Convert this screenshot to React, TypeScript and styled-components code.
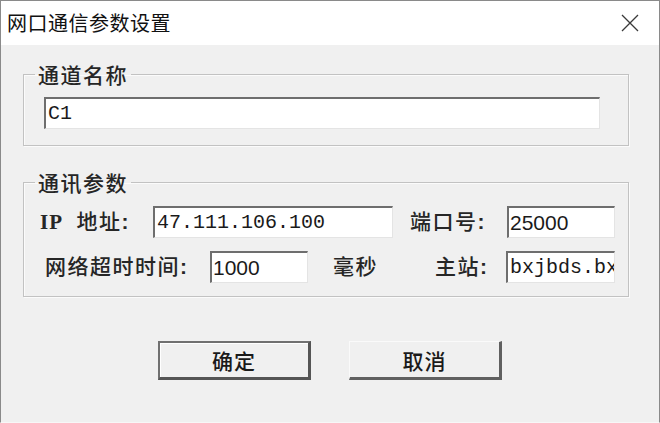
import React from "react";
import styled, { createGlobalStyle } from "styled-components";

const Global = createGlobalStyle`
  html, body { margin: 0; padding: 0; background: #f0f0f0; }
  body { width: 660px; height: 423px; overflow: hidden; }
  * { box-sizing: border-box; }
`;

const Window = styled.div`
  width: 660px;
  height: 423px;
  border: 1px solid #8a8a8a;
  border-bottom: 1px solid #f7f7f7;
  background: #f0f0f0;
  display: flex;
  flex-direction: column;
  font-family: "Noto Sans CJK SC", sans-serif;
  color: #1c1c1c;
`;

const TitleBar = styled.div`
  height: 44px;
  flex: none;
  background: #ffffff;
  display: flex;
  align-items: center;
  justify-content: space-between;
  padding: 0 20px 0 6px;
`;

const Title = styled.div`
  font-size: 20px;
  line-height: 1;
  color: #111;
  letter-spacing: 0.5px;
`;

const CloseIcon = styled.svg`
  width: 18px;
  height: 18px;
  display: block;
`;

const Body = styled.div`
  flex: 1;
  display: flex;
  flex-direction: column;
  padding: 17px 30px 0 22px;
`;

const Group = styled.fieldset<{ $top?: number }>`
  margin: ${(p) => p.$top ?? 0}px 0 0 0;
  padding: 0;
  min-width: 0;
  border: 1px solid #c2c2c2;
  box-shadow: inset 1px 1px 0 #fbfbfb, 1px 1px 0 #fbfbfb;
`;

const Legend = styled.legend`
  margin-left: 11px;
  padding: 0 3px;
  font-size: 21px;
  font-weight: 500;
  line-height: 24px;
  letter-spacing: 1.5px;
  color: #262626;
`;

const GroupInner = styled.div<{ $pad: string }>`
  padding: ${(p) => p.$pad};
  display: flex;
  flex-direction: column;
  gap: 13px;
`;

const Row = styled.div`
  display: flex;
  align-items: center;
  height: 32px;
`;

const Label = styled.div<{ $w: number; $pl?: number }>`
  width: ${(p) => p.$w}px;
  flex: none;
  padding-left: ${(p) => p.$pl ?? 0}px;
  font-family: "Liberation Serif", "Noto Sans CJK SC", serif;
  font-size: 21px;
  font-weight: 500;
  letter-spacing: 1.5px;
  line-height: 1;
  white-space: pre;
  color: #262626;
`;

const Latin = styled.span`
  font-weight: 700;
  letter-spacing: 1px;
`;

const Colon = styled.span`
  font-weight: 700;
  font-family: "Liberation Sans", sans-serif;
`;

const TextBox = styled.input<{ $w: number; $mono?: boolean }>`
  width: ${(p) => p.$w}px;
  height: 32px;
  flex: none;
  margin: 0;
  background: #ffffff;
  border-style: solid;
  border-width: 2px 1px 1px 2px;
  border-color: #6e6e6e #e4e4e4 #e4e4e4 #6e6e6e;
  border-radius: 0;
  padding: 0 0 0 ${(p) => (p.$mono ? 2 : 1)}px;
  font-family: ${(p) =>
    p.$mono ? '"Liberation Mono", monospace' : '"Liberation Sans", sans-serif'};
  font-size: ${(p) => (p.$mono ? 20 : 21)}px;
  color: #1a1a1a;
  outline: none;
`;

const ButtonRow = styled.div`
  display: flex;
  justify-content: center;
  gap: 38px;
  margin-top: 44px;
  padding-left: 8px;
`;

const Button = styled.button<{ $primary?: boolean }>`
  width: 153px;
  height: 39px;
  margin: 0;
  padding: 0;
  background: #f0f0f0;
  font-family: "Noto Sans CJK SC", sans-serif;
  font-size: 21px;
  font-weight: 500;
  letter-spacing: 1px;
  color: #1a1a1a;
  border-style: solid;
  border-radius: 0;
  border-width: ${(p) => (p.$primary ? "2px 3px 3px 2px" : "1px 3px 3px 1px")};
  border-color: ${(p) =>
    p.$primary
      ? "#707070 #555555 #555555 #707070"
      : "#fafafa #606060 #606060 #fafafa"};
  box-shadow: ${(p) => (p.$primary ? "inset 1px 1px 0 #ffffff" : "none")};
`;

export default function App() {
  return (
    <>
      <Global />
      <Window>
        <TitleBar>
          <Title>网口通信参数设置</Title>
          <CloseIcon viewBox="0 0 18 18">
            <path d="M1 1 L17 17 M17 1 L1 17" stroke="#3a3a3a" strokeWidth="1.3" fill="none" />
          </CloseIcon>
        </TitleBar>
        <Body>
          <Group>
            <Legend>通道名称</Legend>
            <GroupInner $pad="11px 0 16px 20px">
              <Row>
                <TextBox $w={556} $mono readOnly defaultValue="C1" />
              </Row>
            </GroupInner>
          </Group>
          <Group $top={24}>
            <Legend>通讯参数</Legend>
            <GroupInner $pad="12px 0 13px 16px">
              <Row>
                <Label $w={113}><Latin>IP</Latin>{"  地址"}<Colon>:</Colon></Label>
                <TextBox $w={240} $mono readOnly defaultValue="47.111.106.100" />
                <Label $w={114} $pl={17}>端口号<Colon>:</Colon></Label>
                <TextBox $w={108} readOnly defaultValue="25000" />
              </Row>
              <Row>
                <Label $w={170} $pl={5}>网络超时时间<Colon>:</Colon></Label>
                <TextBox $w={98} readOnly defaultValue="1000" />
                <Label $w={127} $pl={25}>毫秒</Label>
                <Label $w={71}>主站<Colon>:</Colon></Label>
                <TextBox $w={109} $mono readOnly defaultValue="bxjbds.bxjbds.com" />
              </Row>
            </GroupInner>
          </Group>
          <ButtonRow>
            <Button $primary>确定</Button>
            <Button>取消</Button>
          </ButtonRow>
        </Body>
      </Window>
    </>
  );
}
